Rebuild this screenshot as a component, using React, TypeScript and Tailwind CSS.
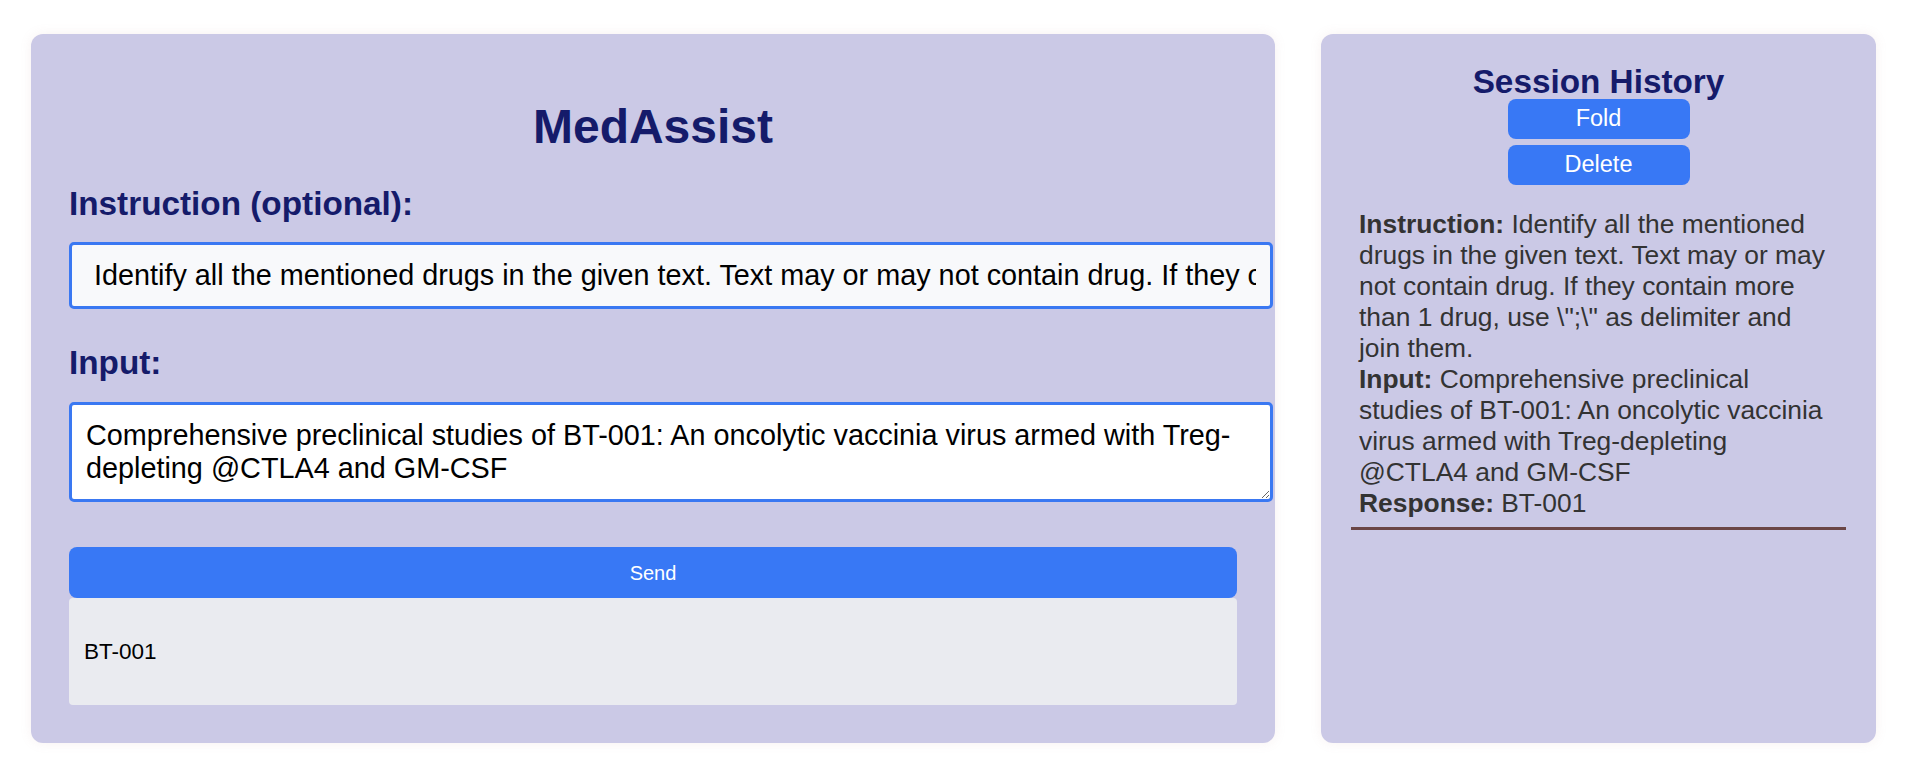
const instruction =
  'Identify all the mentioned drugs in the given text. Text may or may not contain drug. If they contain more than 1 drug, use \\";\\" as delimiter and join them.';
const inputText =
  "Comprehensive preclinical studies of BT-001: An oncolytic vaccinia virus armed with Treg-depleting @CTLA4 and GM-CSF";

function HistoryItem() {
  return (
    <div className="mt-[16px] pl-[8px] pr-[12px] py-[8px] border-b-[3px] border-[#6b4646] text-[26.4px] leading-[31px] text-[#333333]">
      <div>
        <strong>Instruction:</strong> {instruction}
      </div>
      <div>
        <strong>Input:</strong> {inputText}
      </div>
      <div>
        <strong>Response:</strong> BT-001
      </div>
    </div>
  );
}

export default function App() {
  return (
    <div className="w-full h-[766px] bg-white flex items-start gap-[46px] pt-[34px] pl-[31px] font-['Liberation_Sans',Arial,sans-serif]">
      {/* Main chat panel */}
      <main className="w-[1244px] h-[709px] shrink-0 bg-[#cbc9e6] rounded-[12px] shadow-[0_0_12px_rgba(190,140,140,0.12)] px-[38px] py-[38px] flex flex-col">
        <h1 className="mt-[27px] text-[48px] leading-[55px] font-bold text-center text-[#151b6a]">
          MedAssist
        </h1>

        <label className="mt-[31px] text-[33.3px] leading-[38px] font-bold text-[#151b6a]">
          Instruction (optional):
        </label>
        <input
          type="text"
          readOnly
          value={" " + instruction}
          className="mt-[19px] w-[1204px] h-[67px] shrink-0 px-[14px] border-[3px] border-[#3a78f2] rounded-[5px] bg-[#f8f9fb] text-black text-[28.8px] outline-none"
        />

        <label className="mt-[35px] text-[33.3px] leading-[38px] font-bold text-[#151b6a]">
          Input:
        </label>
        <textarea
          readOnly
          value={inputText}
          className="mt-[20px] w-[1204px] h-[100px] shrink-0 px-[14px] py-[14px] border-[3px] border-[#3a78f2] rounded-[5px] bg-white text-black text-[28.8px] leading-[33px] outline-none"
        />

        <button className="mt-[45px] w-full h-[51px] shrink-0 rounded-[8px] bg-[#3878f5] text-white text-[20px]">
          Send
        </button>
        <div className="w-full h-[107px] shrink-0 rounded-[4px] bg-[#eaebf0] flex items-center px-[15px] text-[22.5px] text-black">
          BT-001
        </div>
      </main>

      {/* History sidebar */}
      <aside className="w-[555px] h-[709px] shrink-0 bg-[#cbc9e6] rounded-[12px] shadow-[0_0_12px_rgba(190,140,140,0.12)] px-[30px] pt-[30px] flex flex-col">
        <h2 className="text-[33.3px] leading-[35px] font-bold text-center text-[#151b6a]">
          Session History
        </h2>
        <button className="mx-auto w-[182px] h-[40px] rounded-[8px] bg-[#3878f5] text-white text-[23.5px]">
          Fold
        </button>
        <button className="mx-auto mt-[6px] w-[182px] h-[40px] rounded-[8px] bg-[#3878f5] text-white text-[23.5px]">
          Delete
        </button>
        <HistoryItem />
      </aside>
    </div>
  );
}
